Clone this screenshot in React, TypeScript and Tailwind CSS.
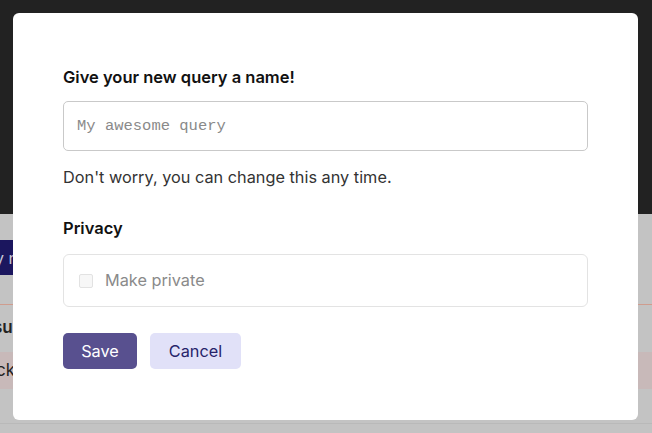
import { useState } from 'react';

function App() {
    const [name, setName] = useState('');
    const [isPrivate, setIsPrivate] = useState(false);

    return (
        <div className="relative h-[433px] w-[652px] overflow-hidden bg-[#c3c3c3] font-['Inter',sans-serif]">
            {/* page behind the overlay */}
            <div className="h-[214px] bg-[#222222]" />
            <div className="flex flex-col">
                <div className="mt-[26px] flex h-[35px] w-[120px] -ml-[100px] items-center justify-end bg-[#1b165e] pr-[2px] text-[16px] text-[#c8c8d8]">
                    my n
                </div>
                <div className="mt-[29px] h-px bg-[#cf9c8e]" />
                <div className="mt-[10px] -ml-[7px] h-[22px] text-[17px] font-semibold text-[#222]">su</div>
                <div className="mt-[15px] flex h-[37px] items-center bg-[#c8b9b9] -ml-[4px] text-[17px] text-[#222]">ck</div>
                <div className="mt-[34px] h-px bg-[#b9b9b9]" />
            </div>

            {/* modal */}
            <div className="absolute left-[13px] top-[13px] h-[407px] w-[625px] rounded-[6px] bg-white px-[50px] pt-[52px]">
                <h2 className="text-[16.5px] font-semibold leading-[24px] text-[#111]">Give your new query a name!</h2>
                <input
                    type="text"
                    value={name}
                    onChange={(e) => setName(e.target.value)}
                    placeholder="My awesome query"
                    className="mt-[12px] h-[50px] w-full rounded-[5px] border border-[#c9c9c9] px-[13px] font-['Liberation_Mono',monospace] text-[15.5px] text-[#333] placeholder:text-[#8a8a8a] focus:outline-none"
                />
                <p className="mt-[14px] text-[16.3px] leading-[24px] text-[#333]">Don't worry, you can change this any time.</p>

                <h3 className="mt-[27px] text-[16.5px] font-semibold leading-[24px] text-[#111]">Privacy</h3>
                <label className="mt-[14px] flex h-[53px] items-center gap-[12px] rounded-[6px] border border-[#e3e3e3] px-[15px]">
                    <input
                        type="checkbox"
                        checked={isPrivate}
                        onChange={(e) => setIsPrivate(e.target.checked)}
                        className="h-[14px] w-[14px] appearance-none rounded-[2px] border border-[#e2e2e2] bg-[#f7f7f7]"
                    />
                    <span className="text-[16.3px] text-[#8a8a8a]">Make private</span>
                </label>

                <div className="mt-[26px] flex gap-[13px]">
                    <button className="h-[36px] w-[74px] rounded-[5px] bg-[#58508f] text-[16.3px] text-white">Save</button>
                    <button className="h-[36px] w-[91px] rounded-[5px] bg-[#e1e1f8] text-[16.3px] text-[#27236a]">Cancel</button>
                </div>
            </div>
        </div>
    );
}

export default App;
